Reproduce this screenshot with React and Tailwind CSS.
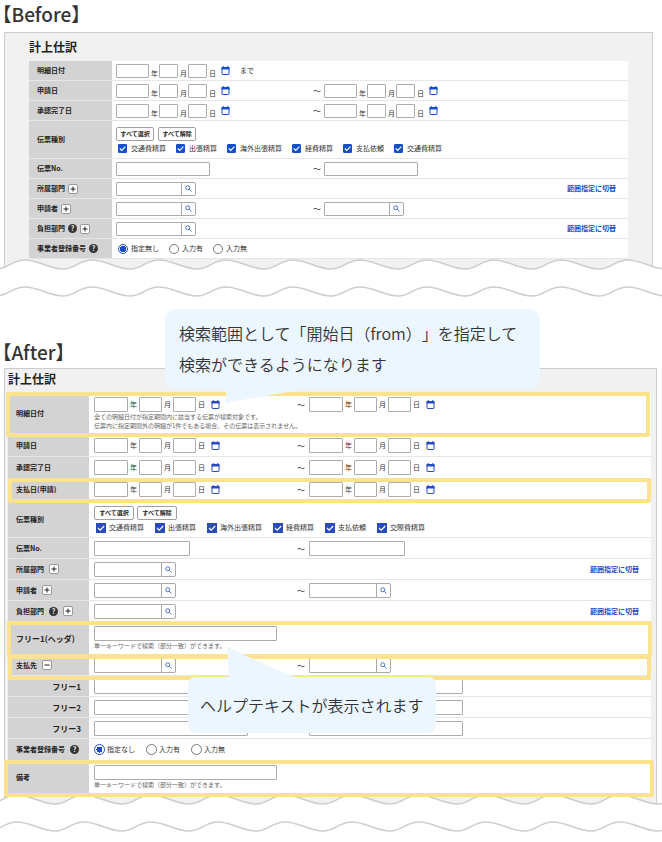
import React from 'react'

const beforeTypes = ['交通費精算', '出張精算', '海外出張精算', '経費精算', '支払依頼', '交通費精算']
const afterTypes = ['交通費精算', '出張精算', '海外出張精算', '経費精算', '支払依頼', '交際費精算']

const box = 'block bg-white border border-[#acacac] rounded-[1px] outline-none'

function TextBox({ label, after, className = '' }) {
  return <input type="text" aria-label={label} className={`${box} ${after ? 'h-[15px]' : 'h-[14px]'} ${className}`} />
}

function CalendarIcon({ after }) {
  return (
    <svg viewBox="0 0 18 18" className={`h-[9px] w-[9px] ${after ? 'text-[#2a4abf]' : 'text-[#1450c8]'}`} fill="none" aria-hidden="true">
      <rect x="2" y="3" width="14" height="14" rx="1" stroke="currentColor" strokeWidth="2" />
      <path d="M1 2h16v5H1z" fill="currentColor" />
      <path d="M4.5 0v3M13.5 0v3" stroke="currentColor" strokeWidth="2" />
    </svg>
  )
}

function DateInput({ label, after }) {
  const small = after ? 'w-[23px]' : 'w-[19px]'
  const unit = after ? '' : 'pl-px'
  return (
    <div className={`flex ${after ? 'items-center gap-0.5' : 'items-end gap-px'}`}>
      <TextBox after={after} label={`${label} 年`} className={after ? 'w-[34px]' : 'w-[33px]'} />
      <span className={unit}>年</span>
      <TextBox after={after} label={`${label} 月`} className={small} />
      <span className={unit}>月</span>
      <TextBox after={after} label={`${label} 日`} className={small} />
      <span className={unit}>日</span>
      <button type="button" aria-label={`${label} カレンダー`} className="self-center pl-1">
        <CalendarIcon after={after} />
      </button>
    </div>
  )
}

function SearchInput({ label, after }) {
  return (
    <div className="flex">
      <TextBox after={after} label={label} className={after ? 'w-[68px]' : 'w-[66px]'} />
      <button
        type="button"
        aria-label={`${label} 検索`}
        className="-ml-px flex w-[15px] items-center justify-center rounded-r-[2px] border border-[#a8a8a8] bg-white text-[#3a62cc]"
      >
        <svg viewBox="0 0 14 14" className="h-[7px] w-[7px]" fill="none" stroke="currentColor" strokeWidth="1.8" aria-hidden="true">
          <circle cx="5.5" cy="5.5" r="4" />
          <path d="M8.5 8.5L13 13" />
        </svg>
      </button>
    </div>
  )
}

function Range({ after, from, to }) {
  return (
    <div className={`grid items-center ${after ? 'grid-cols-[203px_12px_1fr]' : 'grid-cols-[197px_11px_1fr]'}`}>
      {from}
      <span className="text-[8px]">～</span>
      {to}
    </div>
  )
}

function DateRange({ label, after }) {
  return (
    <Range
      after={after}
      from={<DateInput after={after} label={`${label} 開始`} />}
      to={<DateInput after={after} label={`${label} 終了`} />}
    />
  )
}

function NumberRange({ label, after }) {
  const width = after ? 'w-24' : 'w-[94px]'
  return (
    <Range
      after={after}
      from={<TextBox after={after} label={`${label} 開始`} className={width} />}
      to={<TextBox after={after} label={`${label} 終了`} className={width} />}
    />
  )
}

function SearchRange({ label, after }) {
  return (
    <Range
      after={after}
      from={<SearchInput after={after} label={`${label} 開始`} />}
      to={<SearchInput after={after} label={`${label} 終了`} />}
    />
  )
}

function SearchSwitch({ label, after }) {
  return (
    <div className="flex items-center justify-between pr-3">
      <SearchInput after={after} label={label} />
      <a href="#range" className={`font-bold ${after ? 'text-[#2a4abf]' : 'text-[#1450c8]'}`}>範囲指定に切替</a>
    </div>
  )
}

function ToggleButton({ open }) {
  return (
    <button
      type="button"
      aria-label={open ? '閉じる' : '開く'}
      className="flex h-[10px] w-[10px] items-center justify-center rounded-[2px] border border-[#999] bg-white text-[#222]"
    >
      <svg viewBox="0 0 6 6" className="h-[6px] w-[6px]" stroke="currentColor" strokeWidth="1" aria-hidden="true">
        <path d={open ? 'M0.5 3h5' : 'M0.5 3h5M3 0.5v5'} />
      </svg>
    </button>
  )
}

function HelpIcon() {
  return (
    <span className="flex h-[9px] w-[9px] items-center justify-center rounded-full bg-[#333] text-[7px] leading-none font-bold text-white">?</span>
  )
}

function TypeSelect({ types, after }) {
  const button = `flex h-[14px] items-center justify-center rounded-[2px] border border-[#a0a0a0] bg-white text-[6px] font-bold text-[#222] ${after ? 'w-10' : 'w-[38px]'}`
  return (
    <div className="flex flex-col gap-[3px]">
      <div className={`flex ${after ? 'gap-[3px]' : 'gap-1'}`}>
        <button type="button" className={button}>すべて選択</button>
        <button type="button" className={button}>すべて解除</button>
      </div>
      <div className={`flex pl-0.5 ${after ? 'gap-[11px]' : 'gap-[10px]'}`}>
        {types.map((type, i) => (
          <label key={i} className={`flex items-center ${after ? 'gap-[3px]' : 'gap-1'}`}>
            <span className="relative">
              <input
                type="checkbox"
                defaultChecked
                className={`peer block appearance-none border ${after ? 'h-[10px] w-[10px] border-[#2a4abf] checked:bg-[#2a4abf]' : 'h-[9px] w-[9px] rounded-[1px] border-[#1450c8] checked:bg-[#1450c8]'}`}
              />
              <svg viewBox="0 0 10 10" className="pointer-events-none absolute inset-0 hidden h-full w-full peer-checked:block" fill="none" stroke="#fff" strokeWidth="1.2" aria-hidden="true">
                <path d="M2 5l2.2 2.2L8.2 3" />
              </svg>
            </span>
            {type}
          </label>
        ))}
      </div>
    </div>
  )
}

function RadioGroup({ name, options, after }) {
  return (
    <div className={`flex ${after ? 'gap-[11px]' : 'gap-[10px] pl-0.5'}`}>
      {options.map((option, i) => (
        <label key={option} className={`flex items-center ${after ? 'gap-0.5' : 'gap-[3px]'}`}>
          <input
            type="radio"
            name={name}
            defaultChecked={i === 0}
            className={`block appearance-none rounded-full border border-[#777] bg-white checked:border-[#1f4cc4] checked:bg-[radial-gradient(circle,#1f4cc4_0_3px,#fff_3px)] ${after ? 'h-[11px] w-[11px]' : 'h-[10px] w-[10px]'}`}
          />
          {option}
        </label>
      ))}
    </div>
  )
}

function HelpTextInput({ label }) {
  return (
    <div>
      <TextBox after label={label} className="w-[183px]" />
      <p className="text-[6px] leading-[10px] text-[#666]">単一キーワードで検索（部分一致）ができます。</p>
    </div>
  )
}

function Row({ label, after, help, toggle, free, sub, mark, height, children }) {
  return (
    <div className={`relative flex border-b border-[#e6e6e6] bg-white ${height}`}>
      <div
        className={`mr-px flex shrink-0 items-center bg-[#d3d3d3] px-2 font-bold text-[#222] ${after ? 'w-[81px] gap-[5px]' : 'w-[83px] gap-[3px]'} ${free ? 'text-[8px]' : ''} ${sub ? 'justify-end' : ''}`}
      >
        <span>{label}</span>
        {help && <HelpIcon />}
        {toggle && <ToggleButton open={toggle === 'open'} />}
      </div>
      <div className={`flex min-w-0 grow flex-col justify-center ${after ? 'pl-1' : 'pl-[3px]'}`}>{children}</div>
      {mark && <div className={`pointer-events-none absolute z-10 rounded-[2px] border-4 border-[#fbe38e] ${mark}`} />}
    </div>
  )
}

// Torn edge of a cut-off panel: two waves with blank paper between them.
function TornEdge({ start }) {
  const period = 67
  const count = 40
  let wave = `M${start} 12`
  for (let i = 0; i < count; i++) {
    const x = start + i * period
    wave += ` C${x + 13} 12 ${x + 15} 3 ${x + 29} 3 C${x + 42} 3 ${x + 54} 12 ${x + period} 12`
  }
  return (
    <svg className="relative -mt-[14px] block h-10 w-full" aria-hidden="true">
      <path d={`${wave} V40 H${start} Z`} fill="#fff" />
      <path d={wave} fill="none" stroke="#cdcdcd" strokeWidth="1.5" />
      <path d={wave} transform="translate(0 27)" fill="none" stroke="#cdcdcd" strokeWidth="1.5" />
    </svg>
  )
}

function BeforeForm() {
  return (
    <section>
      <h2 className="mb-1 pl-0.5 text-[19px] leading-7 font-medium [text-spacing-trim:trim-start]">【Before】</h2>
      <div className="mr-[9px] ml-1 border border-b-0 border-[#ccc] bg-[#f1f1f1] px-6 pb-3">
        <h3 className="text-xs leading-7 font-bold text-[#222]">計上仕訳</h3>
        <Row label="明細日付" height="min-h-5">
          <div className="flex items-center gap-[10px]">
            <DateInput label="明細日付" />
            <span>まで</span>
          </div>
        </Row>
        <Row label="申請日" height="min-h-5"><DateRange label="申請日" /></Row>
        <Row label="承認完了日" height="min-h-5"><DateRange label="承認完了日" /></Row>
        <Row label="伝票種別" height="min-h-[38px]"><TypeSelect types={beforeTypes} /></Row>
        <Row label="伝票No." height="min-h-5"><NumberRange label="伝票No." /></Row>
        <Row label="所属部門" toggle="closed" height="min-h-5"><SearchSwitch label="所属部門" /></Row>
        <Row label="申請者" toggle="closed" height="min-h-5"><SearchRange label="申請者" /></Row>
        <Row label="負担部門" help toggle="closed" height="min-h-5"><SearchSwitch label="負担部門" /></Row>
        <Row label="事業者登録番号" help height="min-h-5">
          <RadioGroup name="before-registration" options={['指定無し', '入力有', '入力無']} />
        </Row>
      </div>
      <TornEdge start={-4} />
    </section>
  )
}

function AfterForm() {
  return (
    <section className="relative mt-[41px]">
      <h2 className="mb-0.5 pl-0.5 text-[19px] leading-7 font-medium [text-spacing-trim:trim-start]">【After】</h2>
      <div className="mr-[5px] ml-1 border border-b-0 border-[#ccc] bg-[#f1f1f1] pr-[5px] pb-3 pl-[3px]">
        <h3 className="pb-1 text-xs leading-5 font-bold text-[#222]">計上仕訳</h3>
        <Row after label="明細日付" height="min-h-[42px]" mark="-top-px right-px -bottom-[3px] -left-0.5">
          <DateRange after label="明細日付" />
          <p className="text-[6px] leading-[9px] text-[#666]">
            全ての明細日付が指定期間内に該当する伝票が検索対象です。<br />
            伝票内に指定期間外の明細が1件でもある場合、その伝票は表示されません。
          </p>
        </Row>
        <Row after label="申請日" height="min-h-[22px]"><DateRange after label="申請日" /></Row>
        <Row after label="承認完了日" height="min-h-[22px]"><DateRange after label="承認完了日" /></Row>
        <Row after label="支払日(申請)" height="min-h-[22px]" mark="-top-px right-0 -bottom-[3px] left-0">
          <DateRange after label="支払日(申請)" />
        </Row>
        <Row after label="伝票種別" height="min-h-[37px]"><TypeSelect after types={afterTypes} /></Row>
        <Row after label="伝票No." height="min-h-[21px]"><NumberRange after label="伝票No." /></Row>
        <Row after label="所属部門" toggle="closed" height="min-h-[21px]"><SearchSwitch after label="所属部門" /></Row>
        <Row after label="申請者" toggle="closed" height="min-h-[21px]"><SearchRange after label="申請者" /></Row>
        <Row after label="負担部門" help toggle="closed" height="min-h-[21px]"><SearchSwitch after label="負担部門" /></Row>
        <Row after free label="フリー1(ヘッダ)" height="min-h-[33px]" mark="-top-px -right-px -bottom-1 -left-px">
          <HelpTextInput label="フリー1(ヘッダ)" />
        </Row>
        <Row after label="支払先" toggle="open" height="min-h-[21px]" mark="top-0 right-0 -bottom-[5px] left-0">
          <SearchRange after label="支払先" />
        </Row>
        {['フリー1', 'フリー2', 'フリー3'].map((label) => (
          <Row key={label} after free sub label={label} height="min-h-[21px]">
            <div className="grid grid-cols-[215px_1fr]">
              <TextBox after label={`${label} 開始`} className="w-[154px]" />
              <TextBox after label={`${label} 終了`} className="w-[154px]" />
            </div>
          </Row>
        ))}
        <Row after label="事業者登録番号" help height="min-h-[22px]">
          <RadioGroup after name="after-registration" options={['指定なし', '入力有', '入力無']} />
        </Row>
        <Row after label="備考" height="min-h-[33px]" mark="-top-px -right-[3px] -bottom-1 -left-1">
          <HelpTextInput label="備考" />
        </Row>
      </div>
      <TornEdge start={-12} />

      <div className="absolute -top-[29px] left-[165px] z-20 w-[375px] rounded-xl bg-[#ebf6ff] px-[14px] py-[9px] text-base leading-[31px] [font-weight:350] [text-spacing-trim:space-all]">
        検索範囲として「開始日（from）」を指定して<br />
        検索ができるようになります
        <svg viewBox="0 0 86 15" className="absolute top-full left-[60px] -mt-px h-[15px] w-[86px]" aria-hidden="true">
          <path d="M2 0L0 15L86 0Z" fill="#ebf6ff" />
        </svg>
      </div>
      <div className="absolute top-[339px] left-[188px] z-20 rounded-lg bg-[#ebf6ff] px-3 py-3 text-base leading-8 [font-weight:350]">
        ヘルプテキストが表示されます
        <svg viewBox="0 0 68 31" className="absolute bottom-full left-[39px] -mb-px h-[31px] w-[68px]" aria-hidden="true">
          <path d="M0 0L2 31H68Z" fill="#ebf6ff" />
        </svg>
      </div>
    </section>
  )
}

export default function App() {
  return (
    <main className="overflow-x-hidden bg-white font-['Noto_Sans_CJK_JP',sans-serif] text-[7px] leading-[9px] text-[#333]" lang="ja">
      <BeforeForm />
      <AfterForm />
    </main>
  )
}
